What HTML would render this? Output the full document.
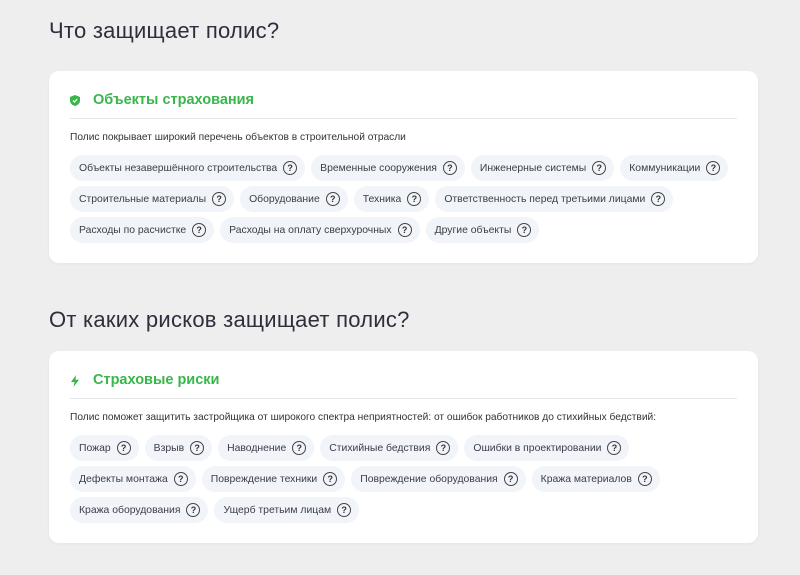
<!DOCTYPE html>
<html><head><meta charset="utf-8"><style>
body{margin:0;background:#eeeeef;font-family:"Liberation Sans","DejaVu Sans",sans-serif;width:800px;height:575px;overflow:hidden;position:relative}
h2{position:absolute;left:49px;margin:0;font-weight:normal;font-size:22px;letter-spacing:0.25px;color:#2e2e3c}
.card{position:absolute;left:49px;width:709px;height:192px;background:#fff;border-radius:10px;box-shadow:0 1px 3px rgba(0,0,0,.04)}
.hd{position:absolute;left:21px;top:20px;right:21px;height:27px;border-bottom:1px solid #e6e7ea}
.hd svg{position:absolute;left:0;top:4px}
.hd span{position:absolute;left:23px;top:1px;font-size:14.5px;font-weight:bold;color:#38b64a}
.ds{position:absolute;left:21px;top:61px;font-size:10.2px;color:#333}
.chips{position:absolute;left:21px;top:84px;width:690px}
.row{display:flex;gap:6px;height:26px;margin-bottom:5px}
.c{background:#f1f4f9;border-radius:13px;height:26px;padding:0 8px 0 9px;display:flex;align-items:center;font-size:10.4px;color:#3d3d46;white-space:nowrap}
.q{display:inline-block;width:12px;height:12px;border:1.2px solid #444;border-radius:50%;font-size:9px;line-height:12px;text-align:center;margin-left:6px;font-weight:bold;color:#333}
</style></head><body>
<h2 style="top:18px">Что защищает полис?</h2>
<div class="card" style="top:71px">
<div class="hd"><svg width="10" height="11" viewBox="0 0 10 11"><path d="M5 0L10 2V5.5C10 8.5 7.5 10.3 5 11C2.5 10.3 0 8.5 0 5.5V2Z" fill="#38b64a"/><path d="M3 5.5L4.5 7L7.2 4" stroke="#fff" stroke-width="1.3" fill="none"/></svg><span>Объекты страхования</span></div>
<div class="ds">Полис покрывает широкий перечень объектов в строительной отрасли</div>
<div class="chips">
<div class="row"><div class="c">Объекты незавершённого строительства<span class="q">?</span></div><div class="c">Временные сооружения<span class="q">?</span></div><div class="c">Инженерные системы<span class="q">?</span></div><div class="c">Коммуникации<span class="q">?</span></div></div>
<div class="row"><div class="c">Строительные материалы<span class="q">?</span></div><div class="c">Оборудование<span class="q">?</span></div><div class="c">Техника<span class="q">?</span></div><div class="c">Ответственность перед третьими лицами<span class="q">?</span></div></div>
<div class="row"><div class="c">Расходы по расчистке<span class="q">?</span></div><div class="c">Расходы на оплату сверхурочных<span class="q">?</span></div><div class="c">Другие объекты<span class="q">?</span></div></div>
</div></div>
<h2 style="top:307px">От каких рисков защищает полис?</h2>
<div class="card" style="top:351px">
<div class="hd"><svg width="10" height="12" viewBox="0 0 10 12"><path d="M6 0L1 7H4.5L3.5 12L9 4.8H5.5Z" fill="#38b64a"/></svg><span>Страховые риски</span></div>
<div class="ds">Полис поможет защитить застройщика от широкого спектра неприятностей: от ошибок работников до стихийных бедствий:</div>
<div class="chips">
<div class="row"><div class="c">Пожар<span class="q">?</span></div><div class="c">Взрыв<span class="q">?</span></div><div class="c">Наводнение<span class="q">?</span></div><div class="c">Стихийные бедствия<span class="q">?</span></div><div class="c">Ошибки в проектировании<span class="q">?</span></div></div>
<div class="row"><div class="c">Дефекты монтажа<span class="q">?</span></div><div class="c">Повреждение техники<span class="q">?</span></div><div class="c">Повреждение оборудования<span class="q">?</span></div><div class="c">Кража материалов<span class="q">?</span></div></div>
<div class="row"><div class="c">Кража оборудования<span class="q">?</span></div><div class="c">Ущерб третьим лицам<span class="q">?</span></div></div>
</div></div>
</body></html>
